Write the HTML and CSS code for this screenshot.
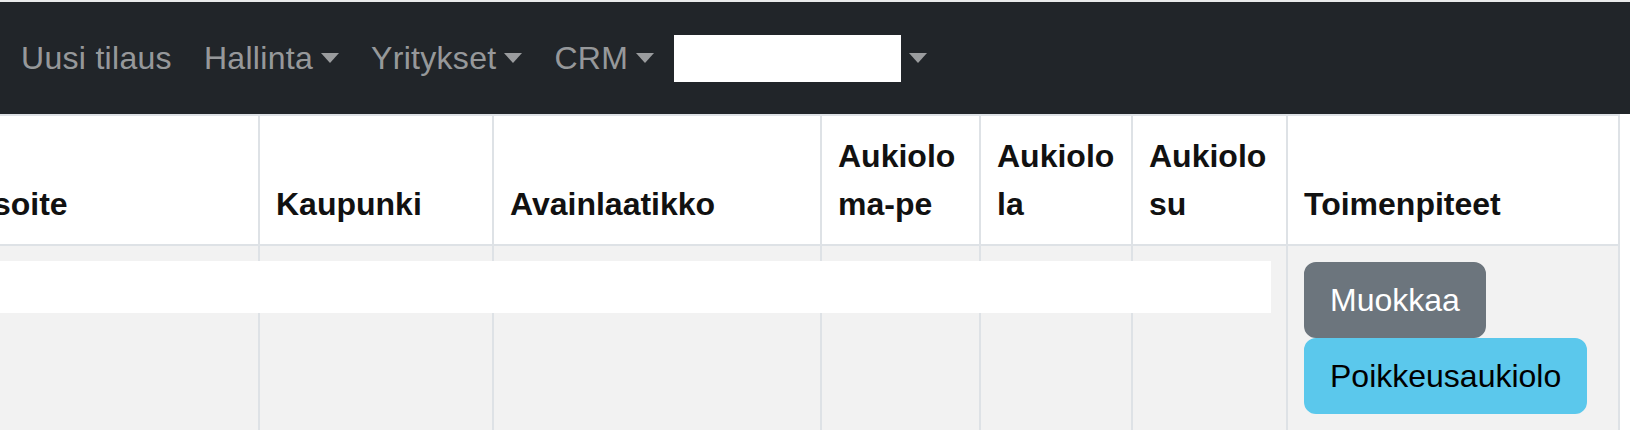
FILE: index.html
```html
<!DOCTYPE html>
<html lang="fi">
<head>
<meta charset="utf-8">
<title>Toimipisteet</title>
<link rel="stylesheet" href="styles.css">
</head>
<body>
<div class="topline"></div>
<nav class="navbar">
  <ul class="nav">
    <li><a class="nav-link">Uusi tilaus</a></li>
    <li><a class="nav-link dropdown-toggle">Hallinta</a></li>
    <li><a class="nav-link dropdown-toggle">Yritykset</a></li>
    <li><a class="nav-link dropdown-toggle">CRM</a></li>
    <li><a class="nav-link dropdown-toggle"><span class="user-redact"></span></a></li>
  </ul>
</nav>
<div class="table-wrap">
  <table class="table">
    <thead>
      <tr>
        <th class="c-osoite">Osoite</th>
        <th class="c-kaupunki">Kaupunki</th>
        <th class="c-avain">Avainlaatikko</th>
        <th class="c-mape">Aukiolo ma-pe</th>
        <th class="c-la">Aukiolo la</th>
        <th class="c-su">Aukiolo su</th>
        <th class="c-toim">Toimenpiteet</th>
      </tr>
    </thead>
    <tbody>
      <tr>
        <td></td>
        <td></td>
        <td></td>
        <td></td>
        <td></td>
        <td></td>
        <td>
          <div class="btn-stack">
            <button class="btn btn-secondary">Muokkaa</button>
            <button class="btn btn-info">Poikkeusaukiolo</button>
          </div>
        </td>
      </tr>
    </tbody>
  </table>
  <div class="row-redact"></div>
</div>
</body>
</html>
```

FILE: styles.css
```css
html, body {
  margin: 0;
  padding: 0;
  background: #ffffff;
}

body {
  font-family: "Liberation Sans", Arial, sans-serif;
  font-size: 32px;
  line-height: 48px;
  color: #212529;
  overflow: hidden;
  width: 1630px;
  height: 430px;
  position: relative;
}

.topline {
  height: 2px;
  background: #e9eaeb;
}

.navbar {
  background: #212529;
  padding: 16px 0;
  height: 80px;
}

.nav {
  list-style: none;
  margin: 0;
  padding: 0 0 0 5px;
  display: flex;
  align-items: center;
}

.nav-link {
  display: block;
  padding: 16px;
  line-height: 48px;
  letter-spacing: 0.3px;
  color: rgba(255, 255, 255, 0.55);
  text-decoration: none;
  white-space: nowrap;
}

.dropdown-toggle::after {
  content: "";
  display: inline-block;
  margin-left: 8px;
  vertical-align: 6px;
  border-top: 10px solid;
  border-right: 9.6px solid transparent;
  border-left: 9.6px solid transparent;
  border-bottom: 0;
}

.user-redact {
  display: inline-block;
  width: 227px;
  height: 47px;
  background: #ffffff;
  vertical-align: -13px;
  margin-left: -12px;
  margin-right: 0;
}

.table-wrap {
  position: relative;
  margin-left: -50px;
}

.table {
  border-collapse: separate;
  border-spacing: 0;
  table-layout: fixed;
  width: 1670px;
  border-top: 2px solid #dee2e6;
  border-left: 2px solid #dee2e6;
}

.table th,
.table td {
  box-sizing: border-box;
  padding: 16px;
  border-right: 2px solid #dee2e6;
  border-bottom: 2px solid #dee2e6;
  text-align: left;
}

.table th {
  font-weight: bold;
  vertical-align: bottom;
  background: #ffffff;
  color: #111111;
}

.table td {
  vertical-align: top;
  background: #f2f2f2;
}

.c-osoite { width: 308px; }
.c-kaupunki { width: 234px; }
.c-avain { width: 328px; }
.c-mape { width: 159px; }
.c-la { width: 152px; }
.c-su { width: 155px; }
.c-toim { width: 332px; }

.btn-stack {
  display: flex;
  flex-direction: column;
  align-items: flex-start;
}

.btn {
  font-family: "Liberation Sans", Arial, sans-serif;
  font-size: 32px;
  line-height: 48px;
  padding: 12px 24px;
  border: 2px solid transparent;
  border-radius: 12px;
  cursor: pointer;
}

.btn-secondary {
  background: #6c757d;
  border-color: #6c757d;
  color: #ffffff;
}

.btn-info {
  background: #5bc8ec;
  border-color: #5bc8ec;
  color: #000000;
}

.row-redact {
  position: absolute;
  left: 50px;
  top: 147px;
  width: 1271px;
  height: 52px;
  background: #ffffff;
}
```
